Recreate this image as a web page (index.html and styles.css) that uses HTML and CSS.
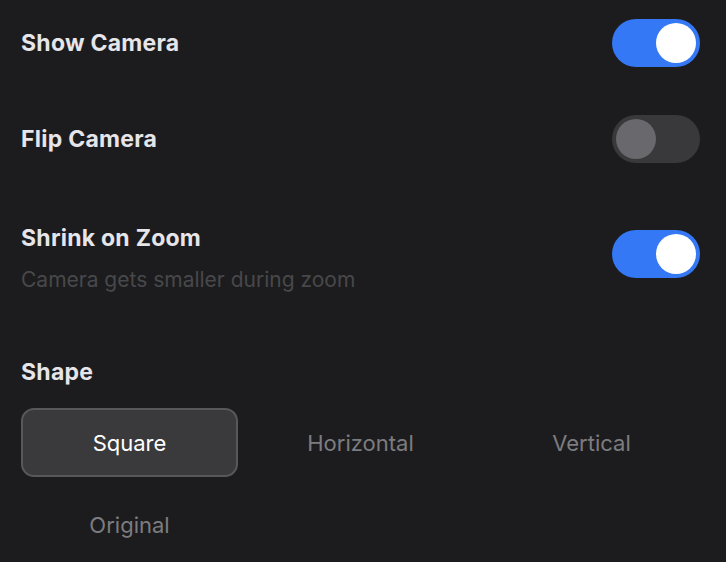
FILE: index.html
```html
<!DOCTYPE html>
<html lang="en">
<head>
<meta charset="utf-8">
<title>Camera settings</title>
<link rel="stylesheet" href="styles.css">
</head>
<body>
<main class="panel">
  <div class="row row-first">
    <div class="title">Show Camera</div>
    <div class="toggle on"><span class="knob"></span></div>
  </div>
  <div class="row row-second">
    <div class="title">Flip Camera</div>
    <div class="toggle off"><span class="knob"></span></div>
  </div>
  <div class="row row-third">
    <div class="text">
      <div class="title">Shrink on Zoom</div>
      <div class="subtitle">Camera gets smaller during zoom</div>
    </div>
    <div class="toggle on toggle-top"><span class="knob"></span></div>
  </div>
  <div class="section-title">Shape</div>
  <div class="segments">
    <div class="seg active">Square</div>
    <div class="seg">Horizontal</div>
    <div class="seg">Vertical</div>
    <div class="seg">Original</div>
  </div>
</main>
</body>
</html>
```
FILE: styles.css
```css
html, body {
  margin: 0;
  padding: 0;
  background: #1c1c1e;
}
body {
  font-family: Inter, "Noto Sans", sans-serif;
  width: 726px;
  height: 562px;
  overflow: hidden;
}
.panel {
  padding: 0 26px 0 21px;
  display: flex;
  flex-direction: column;
}
.row {
  display: flex;
  justify-content: space-between;
  align-items: center;
}
.row-first { margin-top: 19px; }
.row-second { margin-top: 48px; }
.row-third { margin-top: 61px; align-items: flex-start; }
.title, .section-title {
  font-size: 23px;
  line-height: 28px;
  font-weight: 700;
  color: #e5e5ea;
  letter-spacing: 0.25px;
}
.subtitle {
  margin-top: 15px;
  font-size: 21px;
  line-height: 26px;
  color: #48484a;
}
.toggle {
  width: 88px;
  height: 48px;
  border-radius: 24px;
  box-sizing: border-box;
  padding: 4px;
  display: flex;
}
.toggle.on { background: #3478f6; justify-content: flex-end; }
.toggle.off { background: #39393c; justify-content: flex-start; }
.toggle-top { margin-top: 6px; }
.knob {
  width: 40px;
  height: 40px;
  border-radius: 50%;
  background: #ffffff;
}
.toggle.off .knob { background: #69696d; }
.section-title { margin-top: 65px; }
.segments {
  margin-top: 22px;
  display: grid;
  grid-template-columns: repeat(3, 1fr);
  grid-auto-rows: 69px;
  column-gap: 14px;
  row-gap: 13px;
}
.seg {
  display: flex;
  align-items: center;
  justify-content: center;
  font-size: 22px;
  color: #7c7c80;
  border-radius: 13px;
  border: 2px solid transparent;
}
.seg.active {
  background: #3a3a3c;
  border-color: #58585b;
  color: #ffffff;
}
```
